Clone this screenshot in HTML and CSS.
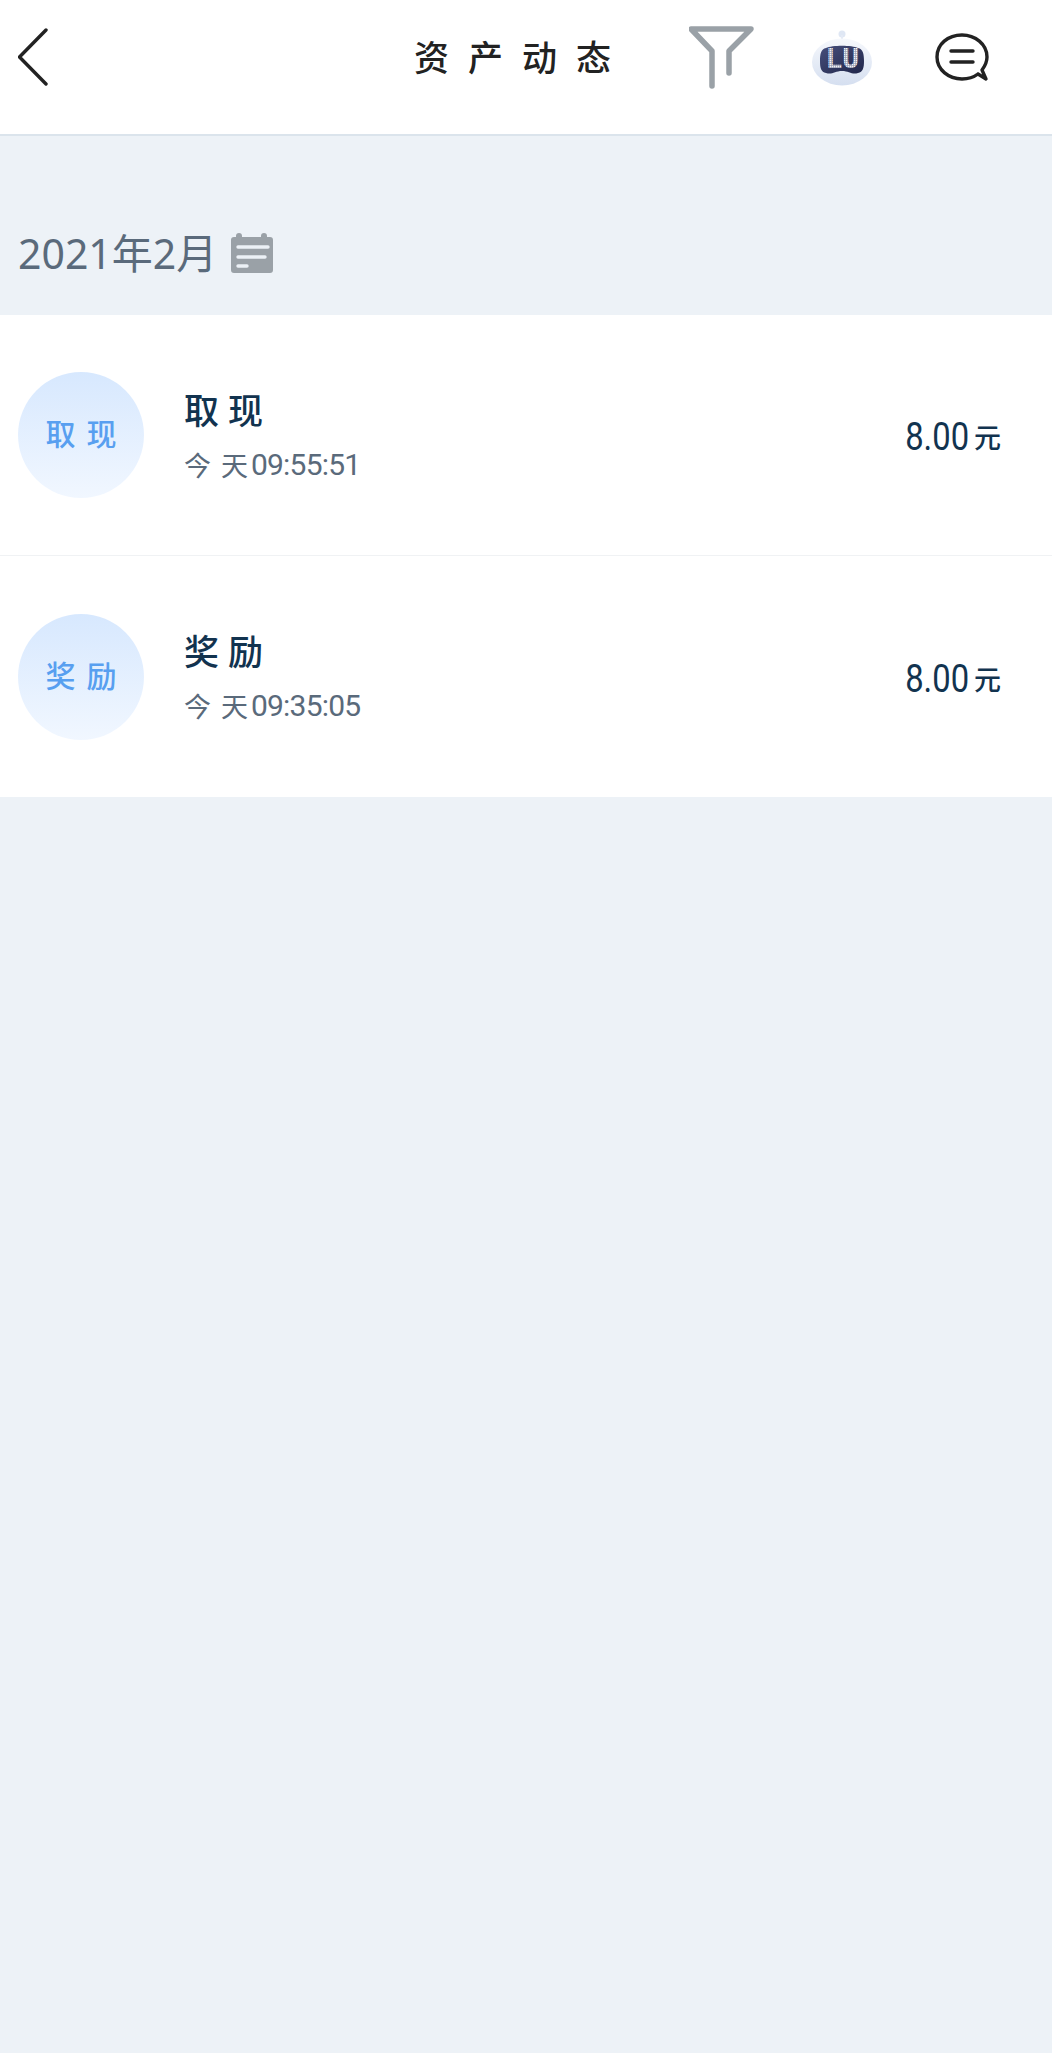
FILE: index.html
```html
<!DOCTYPE html>
<html lang="zh-CN">
<head>
<meta charset="utf-8">
<title>资产动态</title>
<link rel="stylesheet" href="styles.css">
</head>
<body>
<header class="topbar">
  <svg class="icon-back" width="30" height="58" viewBox="0 0 30 58"><path d="M28 2 1.5 29 28 56" fill="none" stroke="#222" stroke-width="3.4" stroke-linecap="round" stroke-linejoin="round"/></svg>
  <h1 class="title">资产动态</h1>
  <svg class="icon-filter" width="66" height="66" viewBox="0 0 66 66"><path d="M23 62V27L2 5H62L40 27V49" fill="none" stroke="#9aa1a7" stroke-width="5.5" stroke-linecap="round" stroke-linejoin="round"/></svg>
  <svg class="icon-robot" width="60" height="56" viewBox="0 0 60 56">
    <defs>
      <linearGradient id="head" x1="0" y1="0" x2="0" y2="1"><stop offset="0" stop-color="#f6f8fc"/><stop offset="1" stop-color="#d5dff0"/></linearGradient>
      <linearGradient id="screen" x1="0" y1="0" x2="1" y2="1"><stop offset="0" stop-color="#474f7c"/><stop offset="1" stop-color="#20264a"/></linearGradient>
      <pattern id="dots" width="2" height="2" patternUnits="userSpaceOnUse"><rect width="2" height="2" fill="#8e93ab"/><rect width="1.4" height="1.4" fill="#f2f3f7"/></pattern>
    </defs>
    <circle cx="30" cy="4" r="3.5" fill="#dfe7f4"/>
    <rect x="29" y="5" width="2" height="7" fill="#e4eaf5"/>
    <ellipse cx="30" cy="32" rx="30" ry="23.5" fill="url(#head)"/>
    <path d="M14 18C20 15 40 15 46 18 51 19 52 24 52 31 52 38 51 42 46 43 40 45 37 41 30 41 23 41 20 45 14 43 9 42 8 38 8 31 8 24 9 19 14 18Z" fill="url(#screen)"/>
    <text class="robot-text" x="30" y="38" text-anchor="middle" fill="url(#dots)">LU</text>
  </svg>
  <svg class="icon-chat" width="56" height="52" viewBox="0 0 56 52">
    <path d="M44 42C40 45 34 47 28 47 15 47 3 38 3 25 3 12 14 3 28 3 41 3 53 12 53 25 53 30 51 34 48 38L52 47 44 42" fill="none" stroke="#222" stroke-width="3.4" stroke-linecap="round" stroke-linejoin="round"/>
    <path d="M17 19H39M17 30H39" fill="none" stroke="#222" stroke-width="3.4" stroke-linecap="round"/>
  </svg>
</header>

<main class="content">
  <div class="month">
    <span class="month-label">2021年2月</span>
    <svg class="icon-calendar" width="44" height="42" viewBox="0 0 44 42">
      <path d="M6 5V4a3 3 0 0 1 6 0V5H31V4a3 3 0 0 1 6 0V5H40a3 3 0 0 1 3 3V38a3 3 0 0 1-3 3H4a3 3 0 0 1-3-3V8a3 3 0 0 1 3-3Z" fill="#9aa1a7"/>
      <path d="M8 15H38M8 25H35M8 34H17" fill="none" stroke="#ecf1f6" stroke-width="3.4" stroke-linecap="round"/>
    </svg>
  </div>

  <section class="list">
    <article class="row">
      <div class="badge">取现</div>
      <div class="info">
        <div class="name">取现</div>
        <div class="time"><span class="day">今天</span><span class="clock">09:55:51</span></div>
      </div>
      <div class="amount"><span class="num">8.00</span><span class="unit">元</span></div>
    </article>
    <article class="row">
      <div class="badge">奖励</div>
      <div class="info">
        <div class="name">奖励</div>
        <div class="time"><span class="day">今天</span><span class="clock">09:35:05</span></div>
      </div>
      <div class="amount"><span class="num">8.00</span><span class="unit">元</span></div>
    </article>
  </section>
</main>
</body>
</html>
```
FILE: styles.css
```css
* { box-sizing: border-box; }

html, body {
  margin: 0;
  padding: 0;
}

body {
  width: 1052px;
  height: 2053px;
  overflow: hidden;
  background: #edf2f7;
  font-family: "Noto Sans", "Noto Sans CJK SC", sans-serif;
}

.topbar {
  display: flex;
  align-items: flex-start;
  height: 136px;
  padding-left: 18px;
  background: #fff;
  border-bottom: 2px solid #dbe4ec;
}

.icon-back { margin-top: 28px; flex: none; }

.title {
  margin: 33px 0 0 366px;
  width: 211px;
  flex: none;
  font: 500 35px/46px "Noto Sans CJK SC", sans-serif;
  letter-spacing: 19px;
  color: #222;
  white-space: nowrap;
}

.icon-filter { margin: 24px 0 0 64px; flex: none; }
.icon-robot { margin: 30px 0 0 57px; flex: none; }
.icon-chat { margin: 32px 0 0 62px; flex: none; }

.robot-text {
  font: 700 29px "Liberation Mono", monospace;
  letter-spacing: -1px;
}

.month {
  display: flex;
  align-items: center;
  gap: 13px;
  height: 179px;
  padding: 55px 0 0 18px;
}

.month-label {
  font-size: 41px;
  line-height: 54px;
  color: #5a6a7b;
}

.icon-calendar { flex: none; }

.list { background: #fff; }

.row {
  display: flex;
  align-items: center;
  height: 241px;
  padding: 0 51px 0 18px;
  border-bottom: 1px solid #f0f2f4;
}

.row:last-child { border-bottom: 0; }

.badge {
  width: 126px;
  height: 126px;
  flex: none;
  display: flex;
  align-items: center;
  justify-content: center;
  border-radius: 50%;
  background: linear-gradient(180deg, #d7e8fe, #f1f7ff);
  font: 500 30px/34px "Noto Sans CJK SC", sans-serif;
  letter-spacing: 11px;
  padding: 0 0 6px 11px;
  color: #589ff0;
}

.info {
  flex: 1;
  margin-left: 40px;
}

.name {
  font: 500 35px/44px "Noto Sans CJK SC", sans-serif;
  letter-spacing: 9px;
  color: #12334f;
  margin-top: -2px;
}

.time {
  display: flex;
  align-items: center;
  margin-top: 17px;
  height: 34px;
  color: #5a6a7b;
}

.day {
  font: 400 27px/34px "Noto Sans CJK SC", sans-serif;
  letter-spacing: 10px;
  width: 67px;
  flex: none;
  white-space: nowrap;
}

.clock {
  font: 400 30px/34px "Roboto", sans-serif;
  letter-spacing: -0.8px;
}

.amount {
  display: flex;
  align-items: center;
  color: #12334f;
  margin-top: 4px;
}

.num {
  font: 400 39px/44px "Roboto", sans-serif;
  display: inline-block;
  transform: scaleX(.84);
  transform-origin: right center;
}

.unit {
  font: 500 27px/34px "Noto Sans CJK SC", sans-serif;
  margin-left: 5px;
}
```
